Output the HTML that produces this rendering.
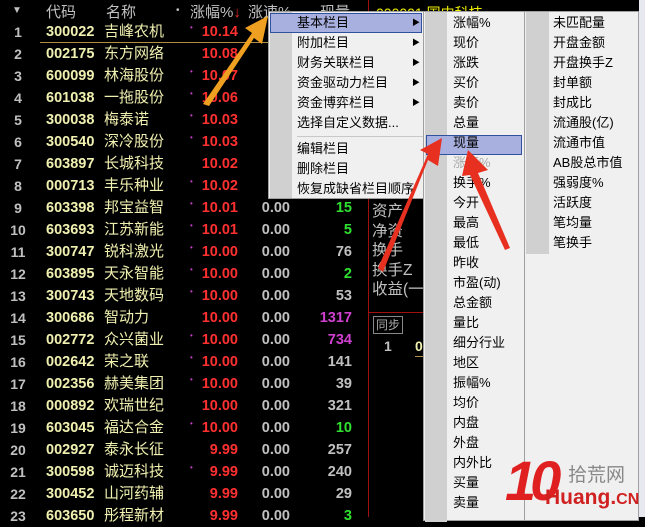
<!DOCTYPE html><html><head><meta charset="utf-8"><style>
*{margin:0;padding:0;box-sizing:border-box}
body{width:645px;height:517px;overflow:hidden;background:#000;position:relative;font-family:"Liberation Sans","Noto Sans CJK SC",sans-serif}
.a{position:absolute;white-space:nowrap}
.hd{color:#c0c0c0;font-size:15px;top:1px}
.r{position:absolute;left:0;width:368px;height:22px;font-size:15px;line-height:22px}
.r span{position:absolute;top:0}
.i{color:#c0c0c0;width:28px;text-align:center;left:4px;font-weight:bold;font-size:14px}
.c{color:#f0f0b0;left:46px;font-weight:bold;font-size:14.5px}
.n{color:#f0f0b0;left:104px}
.d{color:#c040c0;left:190px;font-size:8px;line-height:14px}
.p{color:#ff3030;right:130px;font-weight:bold;font-size:14.5px}
.s{color:#c0c0c0;right:78px;font-weight:bold;font-size:14.5px}
.v{color:#c0c0c0;right:16px;font-weight:bold;font-size:14.5px}
.m{position:absolute;background:#f0f0f0;border:1px solid #a0a0a0;font-size:13px;color:#000}
.m div{position:absolute;white-space:nowrap;height:20px;line-height:20px}
.hl{background:#a8b0e0;border:1px solid #3050a0}
</style></head><body>
<div class="a hd" style="left:12px;font-size:10px;top:5px">▼</div>
<div class="a hd" style="left:46px">代码</div>
<div class="a hd" style="left:106px">名称</div>
<div class="a hd" style="left:176px;font-size:10px;top:5px">•</div>
<div class="a hd" style="left:190px">涨幅%<span style="color:#f03030">↓</span></div>
<div class="a hd" style="left:248px">涨速%</div>
<div class="a hd" style="left:320px">现量</div>
<div class="a" style="left:40px;top:42px;width:328px;height:1px;background:#b09040"></div>
<div class="a" style="left:368px;top:0;width:1px;height:517px;background:#a01010"></div>
<div class="a" style="left:368px;top:190px;width:4px;height:1px;background:#a01010"></div>
<div class="a" style="left:369px;top:312px;width:56px;height:1px;background:#a01010"></div>
<div class="a" style="left:376px;top:3px;color:#f0f000;font-size:14px">000001 国内科技</div>
<div class="a" style="left:372px;top:202px;color:#c0c0c0;font-size:15.5px;line-height:19.5px">资产<br>净资<br>换手<br>换手Z<br>收益(一)</div>
<div class="a" style="left:373px;top:316px;border:1px solid #888;color:#aaa;font-size:12px;padding:0 2px;line-height:16px">同步</div>
<div class="a" style="left:384px;top:338px;color:#c0c0c0;font-size:14px;font-weight:bold">1</div>
<div class="a" style="left:415px;top:338px;color:#f0f0b0;font-size:14px;font-weight:bold">0</div>
<div class="a" style="left:415px;top:356px;width:10px;height:1px;background:#b09040"></div>
<div id="t"></div>
<div class="m" style="left:268px;top:11px;width:156px;height:188px">
<div style="left:1px;top:0;width:22px;height:186px;background:#d0d0d0"></div>
<div class="hl" style="left:1px;top:1px;width:152px"></div>
<div style="left:28px;top:1px">基本栏目</div><div style="left:28px;top:21px">附加栏目</div><div style="left:28px;top:41px">财务关联栏目</div><div style="left:28px;top:61px">资金驱动力栏目</div><div style="left:28px;top:81px">资金博弈栏目</div><div style="left:28px;top:101px">选择自定义数据...</div>
<div style="left:28px;top:124px;width:126px;height:1px;background:#c8c8c8"></div>
<div style="left:28px;top:127px">编辑栏目</div><div style="left:28px;top:147px">删除栏目</div><div style="left:28px;top:167px">恢复成缺省栏目顺序</div>
<div style="left:143px;top:1px;font-size:8px">▶</div><div style="left:143px;top:21px;font-size:8px">▶</div><div style="left:143px;top:41px;font-size:8px">▶</div><div style="left:143px;top:61px;font-size:8px">▶</div><div style="left:143px;top:81px;font-size:8px">▶</div>
</div>
<div class="m" style="left:423px;top:11px;width:102px;height:510px">
<div style="left:1px;top:0;width:22px;height:510px;background:#d0d0d0"></div>
<div class="hl" style="left:2px;top:123px;width:96px"></div>
<div id="m2"></div>
</div>
<div class="m" style="left:524px;top:11px;width:115px;height:510px">
<div style="left:1px;top:0;width:23px;height:242px;background:#d0d0d0"></div>
<div id="m3"></div>
</div>
<div class="a" style="left:639px;top:0;width:6px;height:517px;background:#e8e8f0"></div>
<svg class="a" style="left:0;top:0" width="645" height="517">
<polygon points="203,104 209,106 254,38 262,44 268,16 245,28 252,33" fill="#f0a020"/>
<polygon points="378,268 383,272 428,160 438,166 442,138 420,150 428,154" fill="#e83020"/>
<polygon points="505,250 510,248 478,173 488,170 468,150 462,176 470,175" fill="#e83020"/>
</svg>
<div class="a" style="left:505px;top:453px;color:#e02020;font-size:56px;font-weight:bold;letter-spacing:-6px;line-height:56px;font-style:italic">10</div>
<div class="a" style="left:568px;top:460px;color:#888;font-size:19px">拾荒网</div>
<div class="a" style="left:545px;top:486px;color:#d02020;font-size:21px;font-weight:bold">Huang.<span style="font-size:16px">CN</span></div>
<script>
var d=[["300022","吉峰农机","10.14","","",1],["002175","东方网络","10.08","","",0],["600099","林海股份","10.07","","",1],["601038","一拖股份","10.06","","",1],["300038","梅泰诺","10.03","","",1],["300540","深冷股份","10.03","","",1],["603897","长城科技","10.02","","",0],["000713","丰乐种业","10.02","","",1],["603398","邦宝益智","10.01","0.00","15g",1],["603693","江苏新能","10.01","0.00","5g",1],["300747","锐科激光","10.00","0.00","76",1],["603895","天永智能","10.00","0.00","2g",1],["300743","天地数码","10.00","0.00","53",1],["300686","智动力","10.00","0.00","1317m",0],["002772","众兴菌业","10.00","0.00","734m",1],["002642","荣之联","10.00","0.00","141",1],["002356","赫美集团","10.00","0.00","39",1],["000892","欢瑞世纪","10.00","0.00","321",0],["603045","福达合金","10.00","0.00","10g",1],["002927","泰永长征","9.99","0.00","257",0],["300598","诚迈科技","9.99","0.00","240",1],["300452","山河药辅","9.99","0.00","29",0],["603650","彤程新材","9.99","0.00","3g",0]];
var h="";d.forEach(function(r,k){var v=r[4],col="#c0c0c0";if(/g$/.test(v)){col="#30e030";v=v.slice(0,-1)}if(/m$/.test(v)){col="#d040d0";v=v.slice(0,-1)}
h+='<div class="r" style="top:'+(21+k*22)+'px"><span class="i">'+(k+1)+'</span><span class="c">'+r[0]+'</span><span class="n">'+r[1]+'</span>'+(r[5]?'<span class="d">•</span>':'')+'<span class="p">'+r[2]+'</span><span class="s">'+r[3]+'</span><span class="v" style="color:'+col+'">'+v+'</span></div>'});
document.getElementById("t").innerHTML=h;
var a="涨幅%,现价,涨跌,买价,卖价,总量,现量,涨速%,换手%,今开,最高,最低,昨收,市盈(动),总金额,量比,细分行业,地区,振幅%,均价,内盘,外盘,内外比,买量,卖量".split(","),s="";
a.forEach(function(t,k){s+='<div style="left:29px;top:'+(1+k*20)+'px'+(k==7?';color:#a8a8a8':'')+'">'+t+'</div>'});
document.getElementById("m2").outerHTML=s;
var b="未匹配量,开盘金额,开盘换手Z,封单额,封成比,流通股(亿),流通市值,AB股总市值,强弱度%,活跃度,笔均量,笔换手".split(",");s="";
b.forEach(function(t,k){s+='<div style="left:28px;top:'+(1+k*20)+'px">'+t+'</div>'});
document.getElementById("m3").outerHTML=s;
</script>
</body></html>
